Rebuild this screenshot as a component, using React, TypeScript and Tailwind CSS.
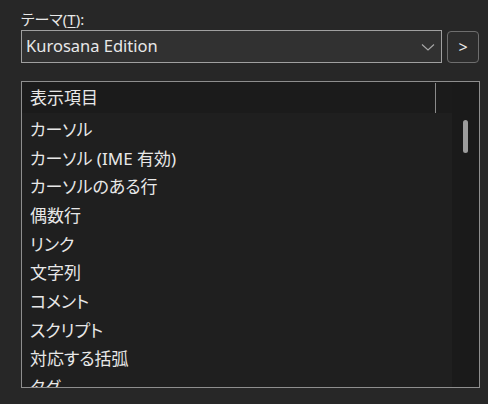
import React from "react";

const items = [
  "カーソル",
  "カーソル (IME 有効)",
  "カーソルのある行",
  "偶数行",
  "リンク",
  "文字列",
  "コメント",
  "スクリプト",
  "対応する括弧",
  "タグ",
];

const font = "font-['Noto_Sans','Noto_Sans_CJK_JP',sans-serif] [font-feature-settings:'palt']";

export default function App() {
  return (
    <div className={`w-[488px] h-[404px] overflow-hidden bg-[#272727] pl-[21px] pt-[8px] text-[#e8e8e8] ${font}`}>
      <div className="h-[22px] text-[15px] leading-[22px]">
        テーマ(<span className="underline underline-offset-2">T</span>):
      </div>

      <div className="flex gap-[5px] h-[33px]">
        <div className="w-[421px] h-[33px] flex items-center justify-between border border-[#a0a0a0] bg-[#313131] pl-[4px] pr-[6px]">
          <span className="text-[16.5px] leading-none">Kurosana Edition</span>
          <svg width="14" height="8" viewBox="0 0 14 8">
            <path d="M1 1.5 L7 7 L13 1.5" fill="none" stroke="#a8a8a8" strokeWidth="1.1" />
          </svg>
        </div>
        <div className="w-[32px] h-[32px] mt-[1px] rounded-[4px] border border-[#6e6e6e] bg-[#2c2c2c] flex items-center justify-center text-[16px] leading-none">
          &gt;
        </div>
      </div>

      <div className="mt-[18px] w-[459px] h-[307px] border border-[#8e8e8e] flex overflow-hidden">
        <div className="flex-1 flex flex-col">
          <div className="h-[31px] shrink-0 bg-[#1b1b1b] flex items-center relative pl-[8px]">
            <span className="text-[17px] leading-none">表示項目</span>
            <div className="absolute right-[16px] top-[1px] bottom-0 w-px bg-[#8a8a8a]" />
          </div>
          <div className="flex-1 bg-[#1f1f1f] pl-[8px] pt-[2px]">
            {items.map((it) => (
              <div key={it} className="h-[28.7px] flex items-center text-[17px] leading-none whitespace-nowrap">
                {it}
              </div>
            ))}
          </div>
        </div>
        <div className="w-[27px] shrink-0 bg-[#1a1a1a] pt-[38px] flex justify-center">
          <div className="w-[5px] h-[33px] rounded-full bg-[#9c9c9c]" />
        </div>
      </div>
    </div>
  );
}
